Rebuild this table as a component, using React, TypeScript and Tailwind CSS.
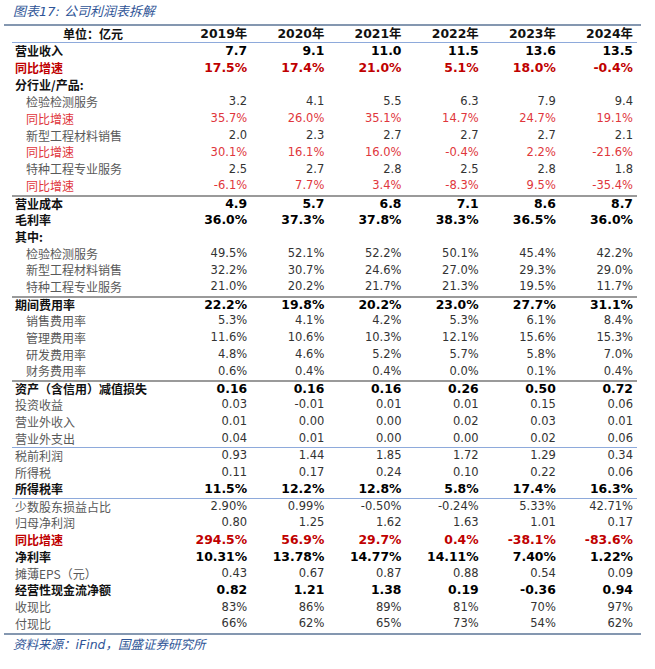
import React from "react";

type Kind = "bold" | "normal" | "redBold" | "red" | "section";
type Row = {
  label: string;
  values?: string[];
  kind: Kind;
  indent?: boolean;
  border?: "gray" | "blue";
};

const rows: Row[] = [
  { label: "营业收入", kind: "bold", values: ["7.7", "9.1", "11.0", "11.5", "13.6", "13.5"] },
  { label: "同比增速", kind: "redBold", values: ["17.5%", "17.4%", "21.0%", "5.1%", "18.0%", "-0.4%"] },
  { label: "分行业/产品:", kind: "section" },
  { label: "检验检测服务", kind: "normal", indent: true, values: ["3.2", "4.1", "5.5", "6.3", "7.9", "9.4"] },
  { label: "同比增速", kind: "red", indent: true, values: ["35.7%", "26.0%", "35.1%", "14.7%", "24.7%", "19.1%"] },
  { label: "新型工程材料销售", kind: "normal", indent: true, values: ["2.0", "2.3", "2.7", "2.7", "2.7", "2.1"] },
  { label: "同比增速", kind: "red", indent: true, values: ["30.1%", "16.1%", "16.0%", "-0.4%", "2.2%", "-21.6%"] },
  { label: "特种工程专业服务", kind: "normal", indent: true, values: ["2.5", "2.7", "2.8", "2.5", "2.8", "1.8"] },
  { label: "同比增速", kind: "red", indent: true, values: ["-6.1%", "7.7%", "3.4%", "-8.3%", "9.5%", "-35.4%"] },
  { label: "营业成本", kind: "bold", border: "gray", values: ["4.9", "5.7", "6.8", "7.1", "8.6", "8.7"] },
  { label: "毛利率", kind: "bold", values: ["36.0%", "37.3%", "37.8%", "38.3%", "36.5%", "36.0%"] },
  { label: "其中:", kind: "section" },
  { label: "检验检测服务", kind: "normal", indent: true, values: ["49.5%", "52.1%", "52.2%", "50.1%", "45.4%", "42.2%"] },
  { label: "新型工程材料销售", kind: "normal", indent: true, values: ["32.2%", "30.7%", "24.6%", "27.0%", "29.3%", "29.0%"] },
  { label: "特种工程专业服务", kind: "normal", indent: true, values: ["21.0%", "20.2%", "21.7%", "21.3%", "19.5%", "11.7%"] },
  { label: "期间费用率", kind: "bold", border: "gray", values: ["22.2%", "19.8%", "20.2%", "23.0%", "27.7%", "31.1%"] },
  { label: "销售费用率", kind: "normal", indent: true, values: ["5.3%", "4.1%", "4.2%", "5.3%", "6.1%", "8.4%"] },
  { label: "管理费用率", kind: "normal", indent: true, values: ["11.6%", "10.6%", "10.3%", "12.1%", "15.6%", "15.3%"] },
  { label: "研发费用率", kind: "normal", indent: true, values: ["4.8%", "4.6%", "5.2%", "5.7%", "5.8%", "7.0%"] },
  { label: "财务费用率", kind: "normal", indent: true, values: ["0.6%", "0.4%", "0.4%", "0.0%", "0.1%", "0.4%"] },
  { label: "资产（含信用）减值损失", kind: "bold", border: "gray", values: ["0.16", "0.16", "0.16", "0.26", "0.50", "0.72"] },
  { label: "投资收益", kind: "normal", values: ["0.03", "-0.01", "0.01", "0.01", "0.15", "0.06"] },
  { label: "营业外收入", kind: "normal", values: ["0.01", "0.00", "0.00", "0.02", "0.03", "0.01"] },
  { label: "营业外支出", kind: "normal", values: ["0.04", "0.01", "0.00", "0.00", "0.02", "0.06"] },
  { label: "税前利润", kind: "normal", border: "blue", values: ["0.93", "1.44", "1.85", "1.72", "1.29", "0.34"] },
  { label: "所得税", kind: "normal", values: ["0.11", "0.17", "0.24", "0.10", "0.22", "0.06"] },
  { label: "所得税率", kind: "bold", values: ["11.5%", "12.2%", "12.8%", "5.8%", "17.4%", "16.3%"] },
  { label: "少数股东损益占比", kind: "normal", border: "blue", values: ["2.90%", "0.99%", "-0.50%", "-0.24%", "5.33%", "42.71%"] },
  { label: "归母净利润", kind: "normal", values: ["0.80", "1.25", "1.62", "1.63", "1.01", "0.17"] },
  { label: "同比增速", kind: "redBold", values: ["294.5%", "56.9%", "29.7%", "0.4%", "-38.1%", "-83.6%"] },
  { label: "净利率", kind: "bold", values: ["10.31%", "13.78%", "14.77%", "14.11%", "7.40%", "1.22%"] },
  { label: "摊薄EPS（元）", kind: "normal", values: ["0.43", "0.67", "0.87", "0.88", "0.54", "0.09"] },
  { label: "经营性现金流净额", kind: "bold", values: ["0.82", "1.21", "1.38", "0.19", "-0.36", "0.94"] },
  { label: "收现比", kind: "normal", values: ["83%", "86%", "89%", "81%", "70%", "97%"] },
  { label: "付现比", kind: "normal", values: ["66%", "62%", "65%", "73%", "54%", "62%"] },
];

const years = ["2019年", "2020年", "2021年", "2022年", "2023年", "2024年"];

const labelFont = "[font-family:'Noto_Sans_CJK_SC','DejaVu_Sans',sans-serif]";
const numFont = "[font-family:'DejaVu_Sans','Noto_Sans_CJK_SC',sans-serif]";

function labelClass(kind: Kind) {
  switch (kind) {
    case "bold":
    case "section":
      return "font-bold text-[#111111]";
    case "redBold":
      return "font-bold text-[#c00000]";
    case "red":
      return "text-[#e0363c]";
    default:
      return "text-[#595959]";
  }
}

function numClass(kind: Kind) {
  switch (kind) {
    case "bold":
    case "section":
      return "font-bold text-[#000000] text-[12.4px]";
    case "redBold":
      return "font-bold text-[#c00000] text-[12.4px]";
    case "red":
      return "text-[#e0363c] text-[11.5px]";
    default:
      return "text-[#333333] text-[11.5px]";
  }
}

export default function App() {
  return (
    <div className="w-[655px] h-[669px] bg-white overflow-hidden">
      <div className="h-[24px] pl-[13px] pt-[4px] italic text-[13px] leading-[16px] text-[#2f5597] [font-family:'DejaVu_Sans','Noto_Sans_CJK_SC',sans-serif]">
        图表17: 公司利润表拆解
      </div>
      <div className="ml-[4px] w-[637px] border-t-2 border-b-2 border-[#8497b0]">
        <div className="pl-[8px] pr-[4px]">
          <div className="grid grid-cols-[162px_repeat(6,minmax(0,1fr))] h-[17px] items-center border-b border-[#8eaadb]">
            <div className={`text-center font-bold text-[12px] leading-none text-[#111111] ${labelFont}`}>单位：亿元</div>
            {years.map((y) => (
              <div key={y} className={`text-right pr-[4px] font-bold text-[12.4px] leading-none text-[#111111] ${numFont}`}>
                {y}
              </div>
            ))}
          </div>
          {rows.map((r, i) => (
            <div
              key={i}
              className={`grid grid-cols-[162px_repeat(6,minmax(0,1fr))] h-[16.85px] items-center ${
                r.border === "gray"
                  ? "border-t-2 border-[#9a9a9a]"
                  : r.border === "blue"
                  ? "border-t border-[#8eaadb]"
                  : ""
              }`}
            >
              <div
                className={`whitespace-nowrap text-[12px] leading-none ${labelFont} ${labelClass(r.kind)} ${
                  r.indent ? "pl-[14px]" : "pl-[3px]"
                }`}
              >
                {r.label}
              </div>
              {(r.values ?? ["", "", "", "", "", ""]).map((v, j) => (
                <div key={j} className={`text-right pr-[4px] leading-none whitespace-nowrap ${numFont} ${numClass(r.kind)}`}>
                  {v}
                </div>
              ))}
            </div>
          ))}
        </div>
      </div>
      <div className="pl-[13px] pt-[2px] italic text-[12.5px] leading-[16px] text-[#2f5597] [font-family:'DejaVu_Sans','Noto_Sans_CJK_SC',sans-serif]">
        资料来源：iFind，国盛证券研究所
      </div>
    </div>
  );
}
